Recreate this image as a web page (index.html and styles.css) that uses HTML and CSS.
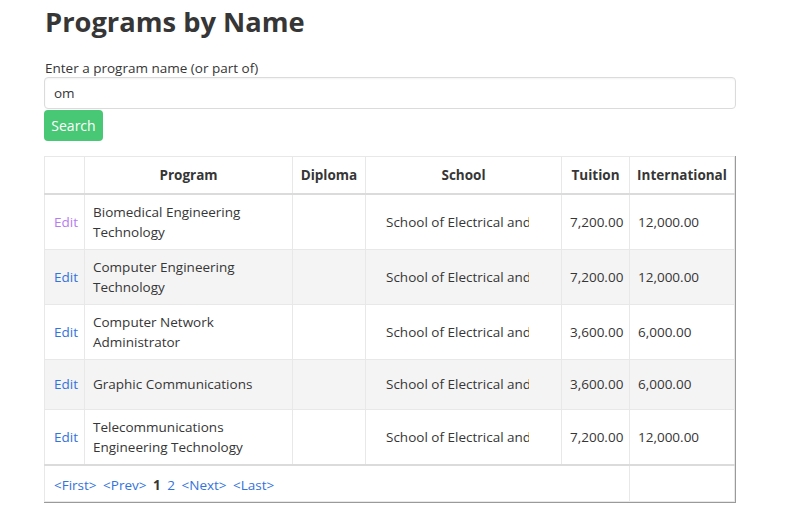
FILE: index.html
```html
<!DOCTYPE html>
<html>
<head>
<meta charset="utf-8">
<link rel="stylesheet" href="styles.css">
</head>
<body>
<div class="container">
  <h1 class="title">Programs by Name</h1>
  <label class="label">Enter a program name (or part of)</label>
  <input class="input" type="text" value="om">
  <button class="button">Search</button>
  <div class="table-wrap">
    <table class="table">
      <colgroup>
        <col style="width:40px"><col style="width:208px"><col style="width:73px"><col style="width:196px"><col style="width:68px"><col style="width:105px">
      </colgroup>
      <thead>
        <tr><th></th><th>Program</th><th>Diploma</th><th>School</th><th>Tuition</th><th>International</th></tr>
      </thead>
      <tbody>
        <tr><td><a class="visited" href="#">Edit</a></td><td>Biomedical Engineering Technology</td><td></td><td><div class="school">School of Electrical and Computer Engineering</div></td><td>7,200.00</td><td>12,000.00</td></tr>
        <tr class="alt"><td><a href="#">Edit</a></td><td>Computer Engineering Technology</td><td></td><td><div class="school">School of Electrical and Computer Engineering</div></td><td>7,200.00</td><td>12,000.00</td></tr>
        <tr><td><a href="#">Edit</a></td><td>Computer Network Administrator</td><td></td><td><div class="school">School of Electrical and Computer Engineering</div></td><td>3,600.00</td><td>6,000.00</td></tr>
        <tr class="alt"><td><a href="#">Edit</a></td><td>Graphic Communications</td><td></td><td><div class="school">School of Electrical and Computer Engineering</div></td><td>3,600.00</td><td>6,000.00</td></tr>
        <tr><td><a href="#">Edit</a></td><td>Telecommunications Engineering Technology</td><td></td><td><div class="school">School of Electrical and Computer Engineering</div></td><td>7,200.00</td><td>12,000.00</td></tr>
      </tbody>
      <tfoot>
        <tr><td colspan="5" class="pager"><a href="#">&lt;First&gt;</a> <a href="#">&lt;Prev&gt;</a> <b>1</b> <a href="#">2</a> <a href="#">&lt;Next&gt;</a> <a href="#">&lt;Last&gt;</a></td><td></td></tr>
      </tfoot>
    </table>
  </div>
</div>
</body>
</html>
```
FILE: styles.css
```css
* { box-sizing: border-box; }
body {
  margin: 0;
  background: #fff;
  font-family: "Open Sans", "Noto Sans", sans-serif;
  font-size: 13.5px;
  color: #4a4a4a;
}
.container {
  padding: 0 0 0 44px;
  width: 736px;
}
.title {
  margin: 0;
  padding: 4px 0 0 1px;
  font-size: 27.3px;
  line-height: 36px;
  font-weight: 700;
  color: #363636;
}
.label {
  display: block;
  margin-top: 19px;
  padding-left: 1px;
  font-size: 13.5px;
  line-height: 18px;
  color: #363636;
}
.input {
  display: block;
  width: 692px;
  height: 32px;
  margin: 0;
  padding: 0 9px;
  border: 1px solid #dbdbdb;
  border-radius: 4px;
  font-family: inherit;
  font-size: 13.5px;
  color: #363636;
  box-shadow: inset 0 1px 2px rgba(10,10,10,0.05);
}
.button {
  display: block;
  height: 31px;
  width: 59px;
  margin: 1px 0 0;
  padding: 0;
  border: none;
  border-radius: 4px;
  background: #48c774;
  color: #fff;
  font-family: inherit;
  font-size: 14px;
}
.table-wrap {
  margin-top: 15px;
  width: 692px;
  border-right: 1px solid #9a9a9a;
  border-bottom: 1px solid #9a9a9a;
}
.table {
  width: 691px;
  border-collapse: collapse;
  table-layout: fixed;
  border: 1px solid #e8e8e8;
}
th, td {
  border: 1px solid #e8e8e8;
  padding: 7px 8px;
  line-height: 20px;
  vertical-align: middle;
  text-align: left;
  color: #363636;
}
th {
  height: 37px;
  font-weight: 700;
  text-align: center;
  white-space: nowrap;
  padding: 8px 3px 7px;
}
thead th { border-bottom: 2px solid #dbdbdb; }
td:first-child { padding-left: 9px; }
tbody td { height: 50px; }
tbody tr:first-child td { height: 55px; }
tbody tr:last-child td { height: 56px; }
.alt td { background: #f4f4f4; }
a { color: #3273dc; text-decoration: none; }
a.visited { color: #b67cf0; }
.school {
  width: 143px;
  margin-left: 12px;
  white-space: nowrap;
  overflow: hidden;
}
tfoot td {
  border-top: 2px solid #dbdbdb;
  height: 36px;
  padding-top: 9px;
  padding-bottom: 5px;
  border-left: none;
}
tfoot td.pager { border-right: 1px solid #e8e8e8; border-left: 1px solid #e8e8e8; word-spacing: 3px; }
.pager b { color: #363636; }
```
